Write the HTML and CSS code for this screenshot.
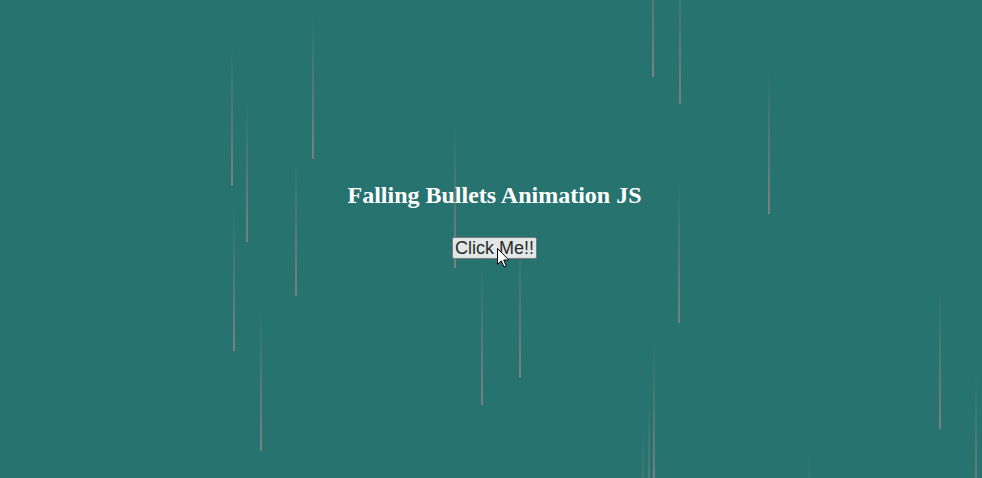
FILE: index.html
```html
<!DOCTYPE html>
<html>
<head>
<meta charset="utf-8">
<link rel="stylesheet" href="styles.css">
</head>
<body>
<div class="rain">
  <div class="bullet" style="left:231px;top:40px"></div>
  <div class="bullet" style="left:246px;top:96px"></div>
  <div class="bullet" style="left:312px;top:13px"></div>
  <div class="bullet" style="left:295px;top:150px"></div>
  <div class="bullet" style="left:233px;top:205px"></div>
  <div class="bullet" style="left:260px;top:305px"></div>
  <div class="bullet" style="left:454px;top:122px"></div>
  <div class="bullet" style="left:481px;top:259px"></div>
  <div class="bullet" style="left:519px;top:232px"></div>
  <div class="bullet" style="left:652px;top:-69px"></div>
  <div class="bullet" style="left:679px;top:-42px"></div>
  <div class="bullet" style="left:768px;top:68px"></div>
  <div class="bullet" style="left:678px;top:177px"></div>
  <div class="bullet" style="left:653px;top:340px"></div>
  <div class="bullet" style="left:648px;top:395px"></div>
  <div class="bullet" style="left:642px;top:425px"></div>
  <div class="bullet" style="left:939px;top:283px"></div>
  <div class="bullet" style="left:975px;top:370px"></div>
  <div class="bullet" style="left:808px;top:450px"></div>
</div>
<main class="stage">
  <h2 class="title">Falling Bullets Animation JS</h2>
  <button class="btn">Click Me!!</button>
</main>
<svg class="cursor" width="13" height="20" viewBox="0 0 13 20">
  <path d="M0.5 0.5 L0.5 16.5 L4.3 12.9 L7 19 L9.3 18 L6.7 12 L11.8 12 Z" fill="#fff" stroke="#000" stroke-width="1" stroke-linejoin="round"/>
</svg>
</body>
</html>
```
FILE: styles.css
```css
html, body {
  margin: 0;
  padding: 0;
  height: 100%;
  overflow: hidden;
}
body {
  background: #267370;
  position: relative;
}
.rain {
  position: absolute;
  inset: 0;
  overflow: hidden;
  pointer-events: none;
}
.bullet {
  position: absolute;
  width: 2px;
  height: 146px;
  background: linear-gradient(to bottom, rgba(128,128,128,0), rgba(128,128,128,0.95));
}
.stage {
  position: relative;
  display: flex;
  flex-direction: column;
  align-items: center;
  padding-top: 181px;
  padding-left: 7px;
}
.title {
  margin: 0;
  font-family: "Liberation Serif", "Times New Roman", serif;
  font-weight: bold;
  font-size: 24px;
  line-height: 28px;
  color: #fff;
}
.btn {
  margin-top: 28px;
  font-family: "Liberation Sans", Arial, sans-serif;
  font-size: 18px;
  line-height: 20px;
  color: #2a2a2a;
  background: #e1e6e6;
  border: 1px solid #7a7a7a;
  border-radius: 2px;
  padding: 0 2px;
}
.cursor {
  position: absolute;
  left: 497px;
  top: 248px;
}
```
